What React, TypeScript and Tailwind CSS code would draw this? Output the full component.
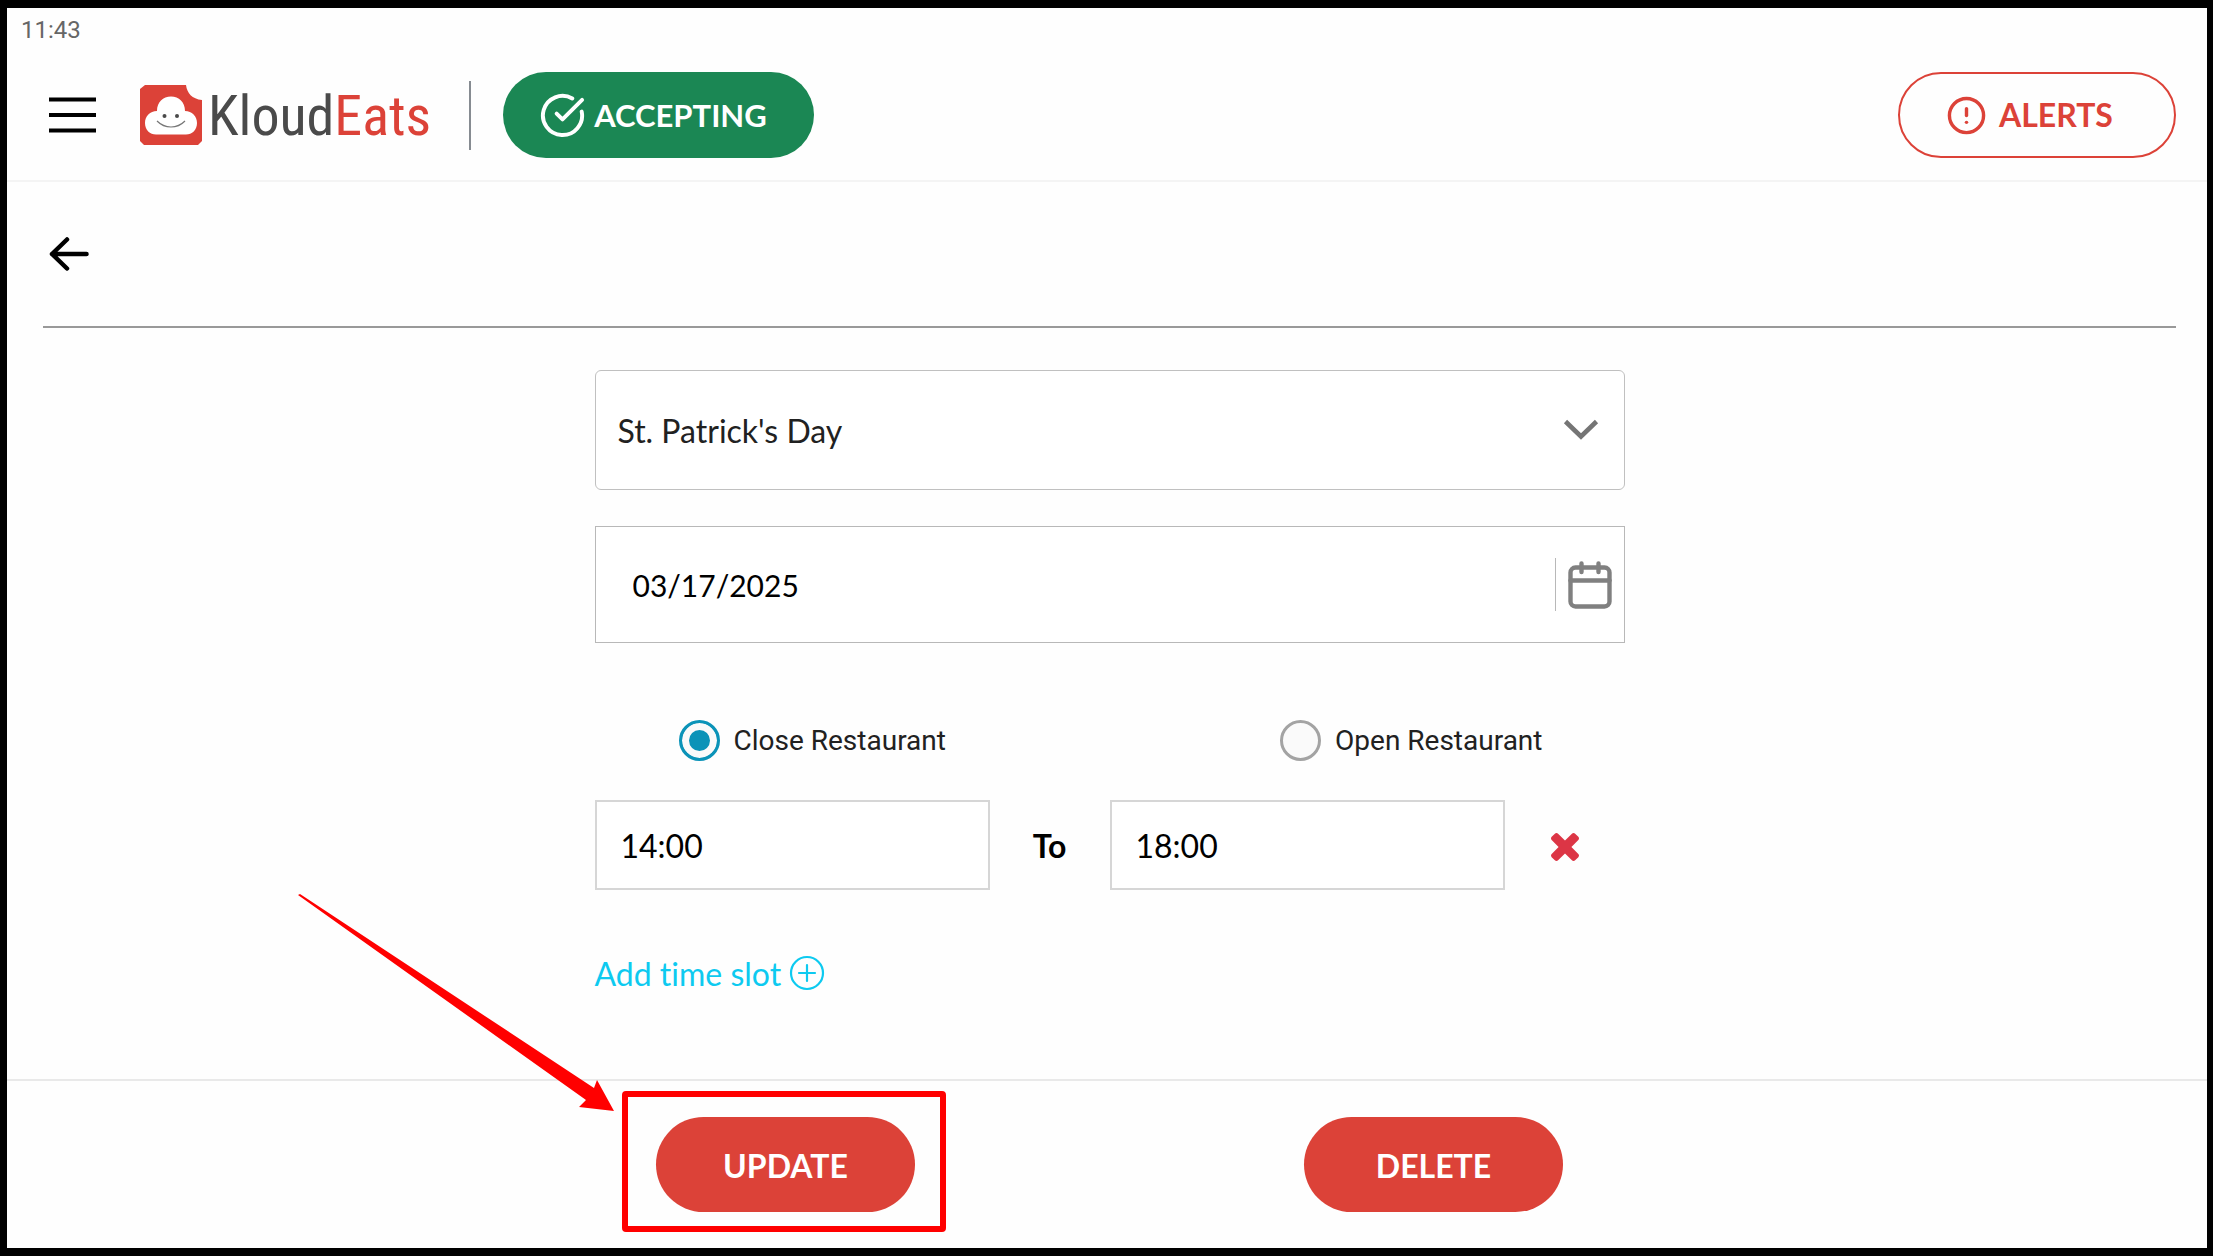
import React, { useState } from 'react';
import { CircleAlert, CircleCheckBig } from 'lucide-react';

interface TimeSlot {
  id: number;
  from: string;
  to: string;
}

const HOLIDAYS = ["St. Patrick's Day", 'Easter Sunday', 'Memorial Day', 'Independence Day', 'Thanksgiving', 'Christmas Day'];

// Cloud mark with the bitten corner
function LogoMark() {
  return (
    <svg width="62" height="62" viewBox="0 0 62 62" aria-hidden="true">
      <path
        d="M5 1H46C47 9 52 15 62 16V57L58 61H4L0 57V5Z"
        fill="#dc4238"
      />
      <path
        d="M17 27C17 18 23 12.500 31 12.500C39 12.500 45 18 45 27C52 27 57 32 57 39C57 46 52 50.500 46 50.500H16C10 50.500 5 46 5 39C5 32 10 27 17 27Z"
        fill="#fff"
      />
      <circle cx="24.500" cy="32" r="2" fill="#4a4a4a" />
      <circle cx="37" cy="32" r="2" fill="#4a4a4a" />
      <path d="M17 37C25 45 37 45 45 37" fill="none" stroke="#777" strokeWidth="1.200" />
    </svg>
  );
}

function MenuIcon() {
  return (
    <svg width="47" height="36" viewBox="0 0 47 36" fill="none" stroke="#000" strokeWidth="4" aria-hidden="true">
      <path d="M0 2.500H47M0 18H47M0 33.500H47" />
    </svg>
  );
}

function BackIcon() {
  return (
    <svg width="40" height="36" viewBox="0 0 40 36" fill="none" stroke="#000" strokeWidth="4.500" strokeLinecap="round" strokeLinejoin="round" aria-hidden="true">
      <path d="M18 3.500L3 18L18 32.500M3 18H37.500" />
    </svg>
  );
}

function ChevronIcon() {
  return (
    <svg className="pointer-events-none absolute right-[26px]" width="36" height="22" viewBox="0 0 36 22" fill="none" stroke="#757575" strokeWidth="4.600" aria-hidden="true">
      <path d="M2.500 2.500L18 17.500L33.500 2.500" />
    </svg>
  );
}

function CalendarIcon() {
  return (
    <svg width="44" height="48" viewBox="0 0 44 48" fill="none" stroke="#808080" strokeWidth="4.400" strokeLinecap="round" aria-hidden="true">
      <rect x="2.500" y="6.500" width="39" height="39" rx="5" />
      <path d="M2.500 19.500H41.500" />
      <path d="M13.500 2.500V11M30.500 2.500V11" />
    </svg>
  );
}

function PlusCircleIcon() {
  return (
    <svg width="36" height="36" viewBox="0 0 36 36" fill="none" stroke="#0dcaf0" strokeWidth="2.200" strokeLinecap="round" aria-hidden="true">
      <circle cx="18" cy="18" r="16" />
      <path d="M18 10V26M10 18H26" />
    </svg>
  );
}

function RemoveIcon() {
  return (
    <svg width="28" height="28" viewBox="110 119 1188 1188" fill="#dc3545" aria-hidden="true">
      <path d="M1298 1075q0 40-28 68l-136 136q-28 28-68 28t-68-28l-294-294-294 294q-28 28-68 28t-68-28l-136-136q-28-28-28-68t28-68l294-294-294-294q-28-28-28-68t28-68l136-136q28-28 68-28t68 28l294 294 294-294q28-28 68-28t68 28l136 136q28 28 28 68t-28 68l-294 294 294 294q28 28 28 68z" />
    </svg>
  );
}

export default function App() {
  const [holiday, setHoliday] = useState(HOLIDAYS[0]);
  const [date, setDate] = useState('03/17/2025');
  const [mode, setMode] = useState<'close' | 'open'>('close');
  const [slots, setSlots] = useState<TimeSlot[]>([{ id: 1, from: '14:00', to: '18:00' }]);

  const updateSlot = (id: number, field: 'from' | 'to', value: string) => {
    setSlots(slots.map((slot) => (slot.id === id ? { ...slot, [field]: value } : slot)));
  };

  const addSlot = () => {
    setSlots([...slots, { id: Date.now(), from: '', to: '' }]);
  };

  const removeSlot = (id: number) => {
    setSlots(slots.filter((slot) => slot.id !== id));
  };

  const timeInput = 'h-[90px] w-full min-w-0 border-2 border-[#d6d6d6] bg-white px-6 outline-none';
  const radioInput =
    'size-[41px] appearance-none rounded-full border-3 border-[#a3a3a3] bg-[#fafafa] checked:border-[#0b93b8] checked:bg-[#0b93b8] checked:shadow-[inset_0_0_0_7px_#fafafa]';
  const actionButton = 'h-[95px] w-[259px] rounded-full bg-[#dc4238] pt-0.5 font-bold text-white';

  return (
    <div className="flex min-h-screen flex-col overflow-hidden border-y-8 border-r-6 border-l-7 border-black bg-[#fefefe] font-[Lato,sans-serif] text-[32px] leading-10 text-black [font-variant-ligatures:none]">
      {/* Status bar */}
      <div className="h-16 px-[14px] pt-1 font-[Roboto,sans-serif] text-2xl leading-9 text-[#666]">11:43</div>

      {/* Header */}
      <header className="flex items-start justify-between border-b-2 border-[#f4f4f4] pr-[31px] pb-[22px] pl-[42px]">
        <div className="flex h-[86px] items-center">
          <button type="button" aria-label="Menu">
            <MenuIcon />
          </button>
          <a href="#home" className="ml-11 flex items-center gap-1.5">
            <LogoMark />
            <span className="pt-0.5 font-['Liberation_Sans_Narrow','Roboto_Condensed',Roboto,sans-serif] text-[56px] leading-[62px] whitespace-nowrap text-[#4a4a4a]">
              Kloud<span className="text-[#dc4238]">Eats</span>
            </span>
          </a>
          <div className="ml-[38px] h-[69px] w-0.5 bg-[#868b91]" />
          <button
            type="button"
            className="ml-8 flex h-[86px] w-[311px] items-center gap-2 rounded-full bg-[#1b8754] pl-9 text-[31px] font-bold text-white"
          >
            <CircleCheckBig size={47} strokeWidth={2} />
            ACCEPTING
          </button>
        </div>
        <button
          type="button"
          className="flex h-[86px] w-[278px] items-center gap-3 rounded-full border-2 border-[#dc4238] pl-[46px] font-bold text-[#dc4238]"
        >
          <CircleAlert size={41} strokeWidth={2} />
          ALERTS
        </button>
      </header>

      {/* Holiday form */}
      <main className="flex grow flex-col pr-[31px] pl-9">
        <div className="flex h-[146px] items-center border-b-2 border-[#999] px-1.5">
          <button type="button" aria-label="Back">
            <BackIcon />
          </button>
        </div>

        <form id="holiday-form" className="mx-auto mt-[42px] w-full max-w-[1030px]" onSubmit={(e) => e.preventDefault()}>
          <div className="relative flex items-center">
            <select
              aria-label="Holiday"
              value={holiday}
              onChange={(e) => setHoliday(e.target.value)}
              className="h-[120px] w-full appearance-none rounded-md border border-[#c0c0c0] bg-white px-[22px] pt-0.5 text-[#212121] outline-none"
            >
              {HOLIDAYS.map((name) => (
                <option key={name}>{name}</option>
              ))}
            </select>
            <ChevronIcon />
          </div>

          <div className="mt-9 flex h-[117px] items-center border border-[#b8b8b8] bg-white pr-3 pl-[37px]">
            <input
              aria-label="Date"
              value={date}
              onChange={(e) => setDate(e.target.value)}
              className="min-w-0 grow bg-transparent text-[30px] outline-none"
            />
            <button type="button" aria-label="Pick a date" className="flex h-[53px] items-center border-l border-[#b8b8b8] pl-3">
              <CalendarIcon />
            </button>
          </div>

          <div className="mt-[76px] flex justify-between pr-[82px] pl-[84px] font-[Roboto,sans-serif] text-[28px] text-[#212121]">
            <label className="flex items-center gap-[14px]">
              <input type="radio" name="mode" checked={mode === 'close'} onChange={() => setMode('close')} className={radioInput} />
              <span className="pt-0.5">Close Restaurant</span>
            </label>
            <label className="flex items-center gap-[14px]">
              <input type="radio" name="mode" checked={mode === 'open'} onChange={() => setMode('open')} className={radioInput} />
              <span className="pt-0.5">Open Restaurant</span>
            </label>
          </div>

          <div className="mt-[39px] flex flex-col gap-6">
            {slots.map((slot) => (
              <div key={slot.id} className="grid grid-cols-[395fr_120fr_395fr_120fr] items-center">
                <input aria-label="From" value={slot.from} onChange={(e) => updateSlot(slot.id, 'from', e.target.value)} className={timeInput} />
                <span className="pt-0.5 text-center font-bold">To</span>
                <input aria-label="To" value={slot.to} onChange={(e) => updateSlot(slot.id, 'to', e.target.value)} className={timeInput} />
                <button type="button" aria-label="Remove time slot" className="mx-auto pt-1" onClick={() => removeSlot(slot.id)}>
                  <RemoveIcon />
                </button>
              </div>
            ))}
          </div>

          <button type="button" onClick={addSlot} className="mt-[62px] flex items-center gap-2 text-[#0dcaf0]">
            <span className="pt-0.5">Add time slot</span>
            <PlusCircleIcon />
          </button>
        </form>
      </main>

      {/* Footer actions */}
      <footer className="flex justify-center gap-[389px] border-t-2 border-[#e9e9e9] pt-9 pr-[31px] pb-9 pl-9">
        <div className="relative">
          <button type="submit" form="holiday-form" className={actionButton}>
            UPDATE
          </button>
          {/* Callout around the button, with its arrow */}
          <div className="pointer-events-none absolute -top-[26px] -right-[31px] -bottom-5 -left-[34px] rounded border-6 border-[#f00]" />
          <svg className="pointer-events-none absolute right-[300px] bottom-[98px]" width="318" height="220" viewBox="0 0 318 220" aria-hidden="true">
            <path d="M1 1L3 0L297 194L300 186L317 217L282 213L289 206Z" fill="#f00" />
          </svg>
        </div>
        <button type="button" className={actionButton}>
          DELETE
        </button>
      </footer>
    </div>
  );
}
